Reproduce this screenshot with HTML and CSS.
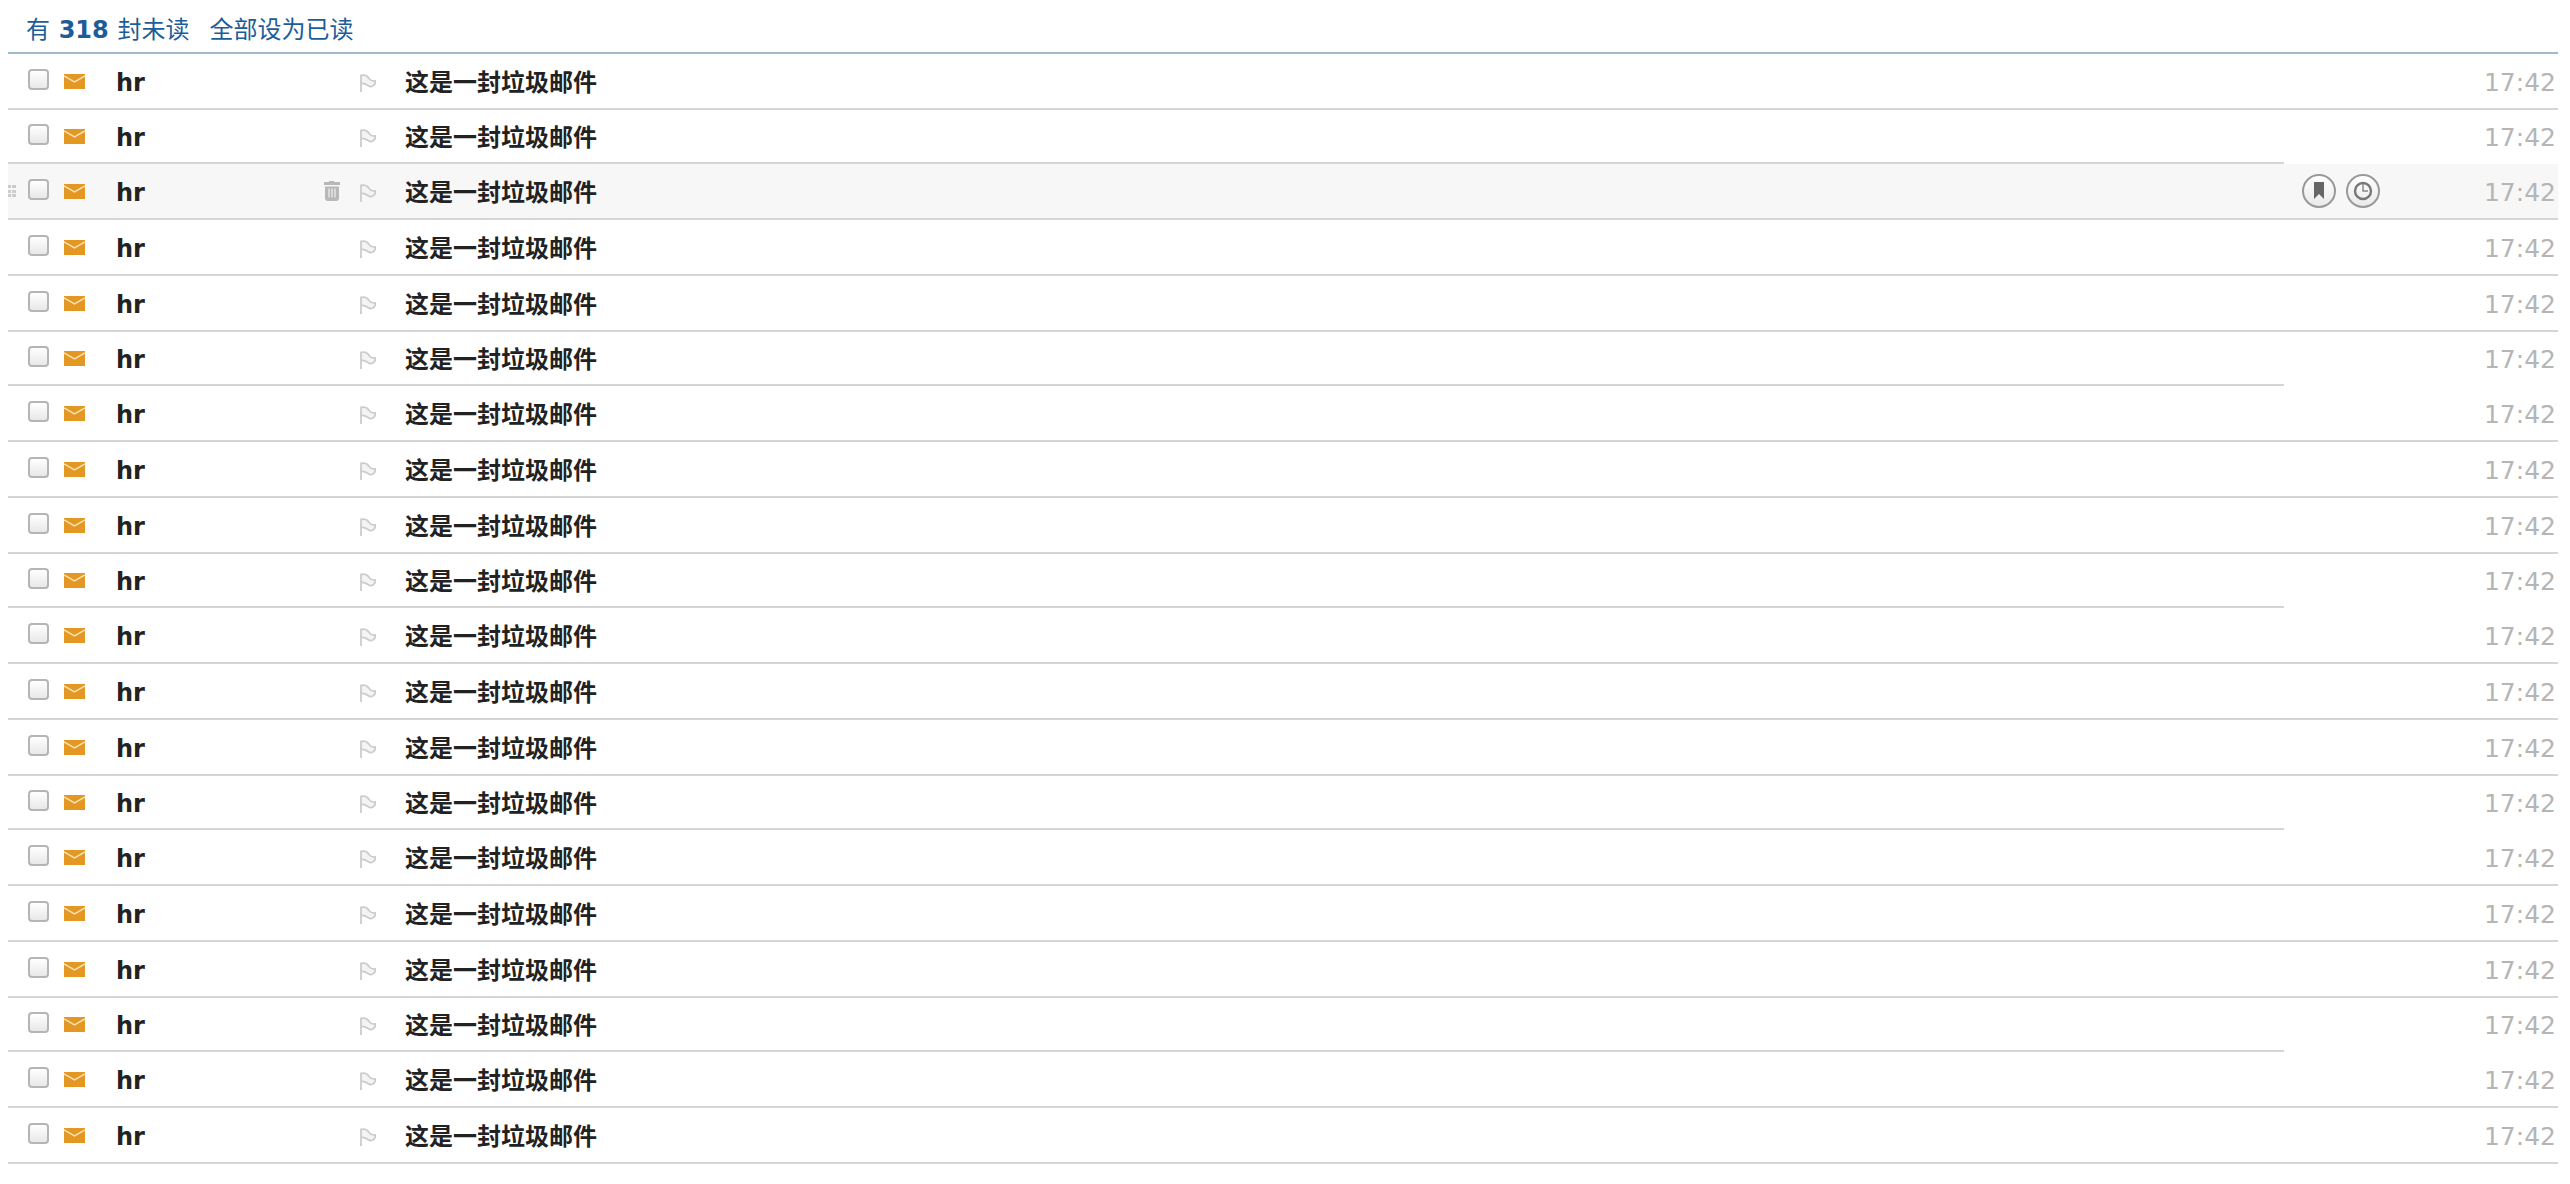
FILE: index.html
```html
<!DOCTYPE html>
<html lang="zh-CN">
<head>
    <meta charset="UTF-8">
    <meta name="viewport" content="width=device-width, initial-scale=1.0">
    <title>收件箱</title>
    <link rel="stylesheet" href="styles.css">
</head>
<body>
    <svg class="sprite" aria-hidden="true">
        <symbol id="icon-grip" viewBox="0 0 8 12">
            <path d="M0 0h3v3H0zM4 0h4v3H4zM0 5h3v3H0zM4 5h4v3H4zM0 9h3v3H0zM4 9h4v3H4z" fill="#ccc"/>
        </symbol>
        <symbol id="icon-mail" viewBox="0 0 21 15">
            <path d="M0 0h21v15H0z" fill="#e49722"/>
            <path d="M0 2l10.500 6L21 2" fill="none" stroke="#fbe3b8" stroke-width="1.500"/>
        </symbol>
        <symbol id="icon-trash" viewBox="0 0 16 20">
            <path d="M5 0h5v1h6v3H0V1h5z" fill="#b8b8b8"/>
            <path d="M1 5.500h14V17q0 3-3 3H4q-3 0-3-3z" fill="#b8b8b8"/>
            <path d="M5 7.500v9M8 7.500v9M11 7.500v9" stroke="#eee" stroke-width="1.200"/>
        </symbol>
        <symbol id="icon-flag" viewBox="0 0 16 18">
            <path d="M1 18V1.500C6 .5 7.500 2 9 4.500c1.500 2 3 3 6.500 2.500C15.500 11 12.500 13 10 12.500 7 12 6 8.500 1 9.500" fill="#f4f4f4" stroke="#ccc" stroke-width="1.800"/>
        </symbol>
        <symbol id="icon-bookmark" viewBox="0 0 34 34">
            <path d="M12 8h10v17l-5-5-5 5z" fill="#666"/>
        </symbol>
        <symbol id="icon-clock" viewBox="0 0 34 34">
            <circle cx="17" cy="17" r="8" fill="none" stroke="#777" stroke-width="2.400"/>
            <path d="M17 10v7h5" fill="none" stroke="#888" stroke-width="1.500"/>
        </symbol>
    </svg>

    <div class="mail-header">
        <span>有 <b>318</b> 封未读</span>
        <a href="#" class="mark-read">全部设为已读</a>
    </div>

    <table class="mail-list">
        <tbody id="mail-rows"></tbody>
    </table>

    <script src="script.js"></script>
</body>
</html>
```
FILE: styles.css
```css
* {
    box-sizing: border-box;
}

body {
    margin: 0;
    padding: 0 12px 20px 8px;
    font-family: Verdana, "DejaVu Sans", "Noto Sans CJK SC", sans-serif;
    font-size: 24px;
    line-height: 32px;
    color: #222;
    background: #fff;
}

svg {
    display: block;
}

.sprite {
    display: none;
}

.mail-header {
    display: flex;
    align-items: center;
    gap: 20px;
    height: 54px;
    padding: 8px 18px 0;
    color: #1d5c99;
    border-bottom: 2px solid #a0bccc;
}

.mail-header b {
    margin: 0 1px;
}

.mark-read {
    color: inherit;
    text-decoration: none;
}

.mail-list {
    width: 100%;
    table-layout: fixed;
    border-spacing: 0;
}

.mail-list td {
    height: 56px;
    padding: 0;
    border-bottom: 2px solid #d5d5d5;
    white-space: nowrap;
}

.mail-row:nth-child(4n+2) td {
    height: 54px;
}

.mail-row:nth-child(4n+2) .col-actions,
.mail-row:nth-child(4n+2) .col-time {
    border-bottom-color: transparent;
}

.mail-row.active {
    background: #f7f7f7;
}

.col-select {
    width: 108px;
}

.select-box {
    display: flex;
    align-items: center;
}

.grip {
    width: 8px;
    height: 12px;
    margin-right: 12px;
}

.select-box input {
    appearance: none;
    width: 21px;
    height: 21px;
    margin: 0 15px 4px 0;
    border: 2px solid #b5b5b5;
    border-radius: 4px;
    background: linear-gradient(#fff, #e8e8e8);
}

.icon-mail {
    width: 21px;
    height: 15px;
}

.col-from {
    width: 208px;
    font-weight: bold;
}

.mail-list .col-from,
.mail-list .col-subject {
    padding-top: 4px;
}

.col-tools {
    width: 81px;
}

.tools {
    display: flex;
    align-items: center;
    gap: 20px;
}

.tools button,
.actions button {
    padding: 0;
    border: 0;
    background: none;
    cursor: pointer;
}

.icon-trash {
    width: 16px;
    height: 20px;
}

.icon-flag {
    width: 16px;
    height: 18px;
    margin-top: 4px;
}

.hidden {
    visibility: hidden;
}

.col-subject {
    font-weight: bold;
}

.col-subject a {
    color: inherit;
    text-decoration: none;
}

.col-actions {
    width: 174px;
}

.actions {
    display: flex;
    gap: 10px;
    padding-left: 18px;
}

.actions button {
    width: 34px;
    height: 34px;
    border: 2px solid #999;
    border-radius: 50%;
    background: linear-gradient(#fff, #eaeaea);
}

.actions svg {
    width: 34px;
    height: 34px;
    margin: -2px;
}

.col-time {
    width: 100px;
    text-align: right;
    font-size: 25px;
    color: #b5b5b5;
}

.mail-list .col-time {
    padding: 4px 2px 0 0;
}
```
FILE: script.js
```js
const mails = Array.from({ length: 20 }, () => ({
    from: 'hr',
    subject: '这是一封垃圾邮件',
    time: '17:42'
}));
const activeIndex = 2;

function icon(name, className) {
    return `<svg class="${className}" aria-hidden="true"><use href="#icon-${name}"/></svg>`;
}

function renderRow(mail, index) {
    const active = index === activeIndex;
    const hidden = active ? '' : ' hidden';
    const actions = `
        <div class="actions">
            <button type="button" aria-label="书签">${icon('bookmark', 'icon-action')}</button>
            <button type="button" aria-label="稍后处理">${icon('clock', 'icon-action')}</button>
        </div>`;

    return `
        <tr class="mail-row${active ? ' active' : ''}">
            <td class="col-select">
                <div class="select-box">
                    ${icon('grip', 'grip' + hidden)}
                    <input type="checkbox" aria-label="选择邮件 ${index + 1}">
                    ${icon('mail', 'icon-mail')}
                </div>
            </td>
            <td class="col-from">${mail.from}</td>
            <td class="col-tools">
                <div class="tools">
                    <button type="button" class="delete${hidden}" aria-label="删除">${icon('trash', 'icon-trash')}</button>
                    <button type="button" aria-label="标记">${icon('flag', 'icon-flag')}</button>
                </div>
            </td>
            <td class="col-subject"><a href="#">${mail.subject}</a></td>
            <td class="col-actions">${active ? actions : ''}</td>
            <td class="col-time">${mail.time}</td>
        </tr>`;
}

document.getElementById('mail-rows').innerHTML = mails.map(renderRow).join('');
```
